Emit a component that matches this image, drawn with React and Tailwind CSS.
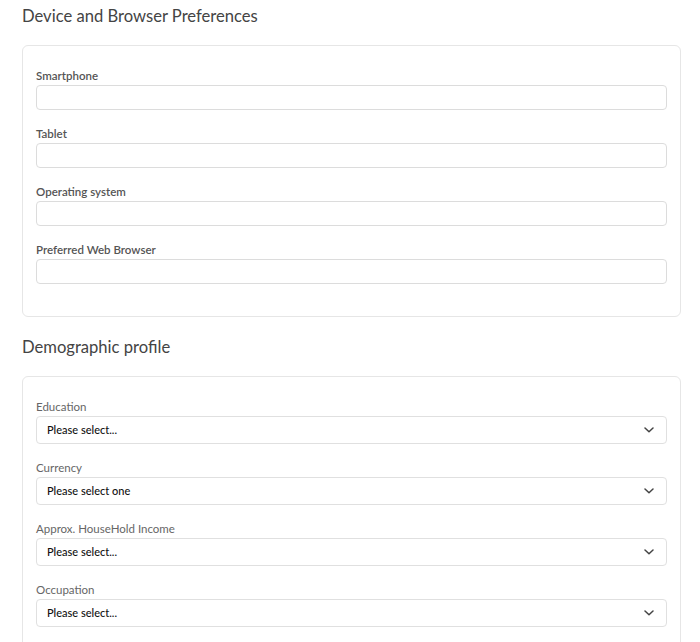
import React from "react";

const Chevron = () => (
  <svg width="10" height="6" viewBox="0 0 10 6" fill="none" className="shrink-0">
    <path d="M1 1l4 3.8L9 1" stroke="#444" strokeWidth="1.5" strokeLinecap="round" strokeLinejoin="round" />
  </svg>
);

function TextField({ label }) {
  return (
    <div className="mb-[17px]">
      <div className="text-[11.5px] leading-[14px] font-semibold text-[#555] mb-[2px]">{label}</div>
      <div className="h-[25px] border border-[#dcdcdc] rounded-[4px] bg-white"></div>
    </div>
  );
}

function SelectField({ label, value }) {
  return (
    <div className="mb-[17px]">
      <div className="text-[11.5px] leading-[14px] text-[#666] mb-[2px]">{label}</div>
      <div className="h-[28px] border border-[#e0e0e0] rounded-[4px] bg-white flex items-center justify-between pl-[10px] pr-[12px]">
        <span className="text-[11px] font-medium text-[#111]">{value}</span>
        <Chevron />
      </div>
    </div>
  );
}

export default function App() {
  return (
    <div className="bg-white min-h-[642px] pl-[22px] pr-[19px] pt-[4px]" style={{ fontFamily: "Lato, 'Noto Sans', sans-serif" }}>
      <h2 className="text-[16.6px] leading-[24px] text-[#444] font-normal">Device and Browser Preferences</h2>
      <div className="mt-[17px] border border-[#e6e6e6] rounded-[6px] px-[13px] pt-[23px] pb-[15px]">
        <TextField label="Smartphone" />
        <TextField label="Tablet" />
        <TextField label="Operating system" />
        <TextField label="Preferred Web Browser" />
      </div>
      <h2 className="mt-[18px] text-[16.6px] leading-[24px] text-[#444] font-normal">Demographic profile</h2>
      <div className="mt-[17px] border border-[#e6e6e6] rounded-[6px] px-[13px] pt-[23px] pb-[15px]">
        <SelectField label="Education" value="Please select..." />
        <SelectField label="Currency" value="Please select one" />
        <SelectField label="Approx. HouseHold Income" value="Please select..." />
        <SelectField label="Occupation" value="Please select..." />
      </div>
    </div>
  );
}
